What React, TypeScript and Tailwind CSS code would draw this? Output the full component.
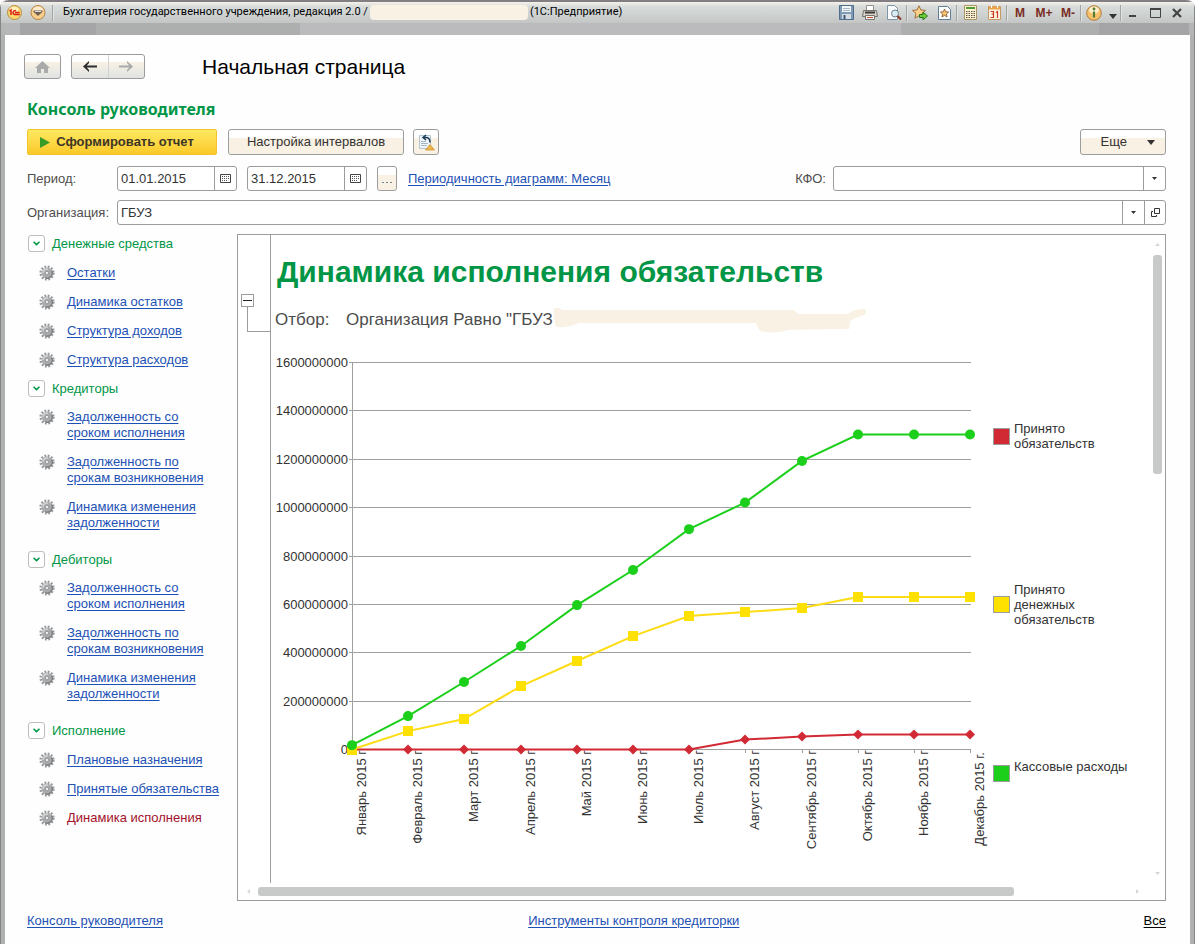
import { useState } from "react";
import type { ReactNode } from "react";

type Group = {
  title: string;
  items: string[];
  spaced?: boolean;
};

const groups: Group[] = [
  {
    title: "Денежные средства",
    items: ["Остатки", "Динамика остатков", "Структура доходов", "Структура расходов"],
  },
  {
    title: "Кредиторы",
    items: [
      "Задолженность со\nсроком исполнения",
      "Задолженность по\nсрокам возникновения",
      "Динамика изменения\nзадолженности",
    ],
  },
  {
    title: "Дебиторы",
    spaced: true,
    items: [
      "Задолженность со\nсроком исполнения",
      "Задолженность по\nсрокам возникновения",
      "Динамика изменения\nзадолженности",
    ],
  },
  {
    title: "Исполнение",
    spaced: true,
    items: ["Плановые назначения", "Принятые обязательства", "Динамика исполнения"],
  },
];

const months = [
  "Январь", "Февраль", "Март", "Апрель", "Май", "Июнь",
  "Июль", "Август", "Сентябрь", "Октябрь", "Ноябрь", "Декабрь",
];

// millions
const obligations = [0, 0, 0, 0, 0, 0, 0, 41, 54, 62, 62, 62];
const moneyObligations = [0, 76, 126, 262, 366, 469, 552, 568, 585, 630, 630, 630];
const expenses = [18, 138, 279, 428, 597, 742, 911, 1021, 1193, 1302, 1302, 1302];

const legend = [
  { label: "Принято\nобязательств", color: "bg-[#d12a34]" },
  { label: "Принято\nденежных\nобязательств", color: "bg-[#ffe100]" },
  { label: "Кассовые расходы", color: "bg-[#1bcf1b]" },
];

const LEFT = 81;
const STEP = 56.2;
const BASE = 409.5;

const px = (i: number) => Math.round(LEFT + i * STEP);
const py = (v: number) => BASE - (v * 387) / 1600;
const line = (values: number[]) => values.map((v, i) => `${px(i)},${py(v)}`).join(" ");

function Gear() {
  return (
    <svg width="16" height="16" viewBox="0 0 16 16" className="shrink-0">
      <circle cx="8" cy="8" r="6.4" fill="none" stroke="#97999b" strokeWidth="2.4" strokeDasharray="1.8 1.55" />
      <circle cx="8" cy="8" r="5.4" fill="#a9abad" />
      <path d="M12.500 5.500A5 5 0 0 1 6 12.600" fill="none" stroke="#7d7f82" strokeWidth="1.500" />
      <path d="M4 8A4 4 0 0 1 9 4.200" fill="none" stroke="#d2d4d5" strokeWidth="1.500" />
      <circle cx="8" cy="8" r="1.800" fill="#e9eaea" stroke="#8b8d90" strokeWidth=".8" />
    </svg>
  );
}

function Caret({ small }: { small?: boolean }) {
  return small ? (
    <svg width="5" height="3" viewBox="0 0 5 3" className="pointer-events-none">
      <path d="M0 0h5L2.5 3z" fill="#333" />
    </svg>
  ) : (
    <svg width="8" height="5" viewBox="0 0 8 5" className="pointer-events-none">
      <path d="M0 0h8L4 5z" fill="#333" />
    </svg>
  );
}

function Calendar() {
  return (
    <svg width="11" height="9" viewBox="0 0 11 9">
      <path d="M.5 .5h10v8H.5z" fill="#fff" stroke="#444" />
      <path d="M2 2.500h7M2 4.500h7M2 6.500h5" stroke="#555" strokeDasharray="1 1" />
    </svg>
  );
}

function Tool({ label, children }: { label: string; children: ReactNode }) {
  return (
    <button aria-label={label} className="flex h-5 w-6 items-center justify-center text-xs font-bold text-[#7a2b22]">
      {children}
    </button>
  );
}

function Sep() {
  return <span className="h-4 w-[2px] border-l border-[#a3a5a5] border-r border-r-[#e0e3e2]" />;
}

function TitleBar() {
  return (
    <header className="rounded-t-lg border-t-2 border-[#817f84] bg-[#b4b6b6]">
      <div className="flex h-[21px] items-center bg-linear-to-b from-[#f7f1e8] via-[#d8dddc] via-20% to-[#c3c6c5] px-[6px] text-black">
        <button aria-label="1С" className="mr-2">
          <svg width="15" height="15" viewBox="0 0 15 15">
            <circle cx="7.5" cy="7.5" r="7" fill="#fbd76c" stroke="#b88a48" />
            <ellipse cx="7" cy="4.5" rx="4.5" ry="2.8" fill="#fff1b8" />
            <path d="M2.500 6l1.500-1v5M9 5.800a2 2 0 1 0-.2 3.600h4M8 7.600h4.600" fill="none" stroke="#d8251c" strokeWidth="1.500" />
          </svg>
        </button>
        <button aria-label="Главное меню" className="mr-[6px]">
          <svg width="16" height="15" viewBox="0 0 16 15">
            <circle cx="8" cy="7.5" r="7" fill="#f9cf8c" stroke="#b58347" />
            <ellipse cx="8" cy="4.5" rx="5" ry="3" fill="#fdebd0" />
            <path d="M3.500 5.500h9v1.200L8 11 3.500 6.700z" fill="#6e5f52" />
            <path d="M5 6.500h6" stroke="#fff" strokeWidth=".8" />
          </svg>
        </button>
        <Sep />
        <span className="ml-[9px] whitespace-nowrap font-['Roboto',sans-serif] text-[11px]">
          Бухгалтерия государственного учреждения, редакция 2.0 /
        </span>
        <span className="mx-[2px] h-[15px] w-[158px] rounded-sm bg-[#f9f1e4]" />
        <span className="whitespace-nowrap font-['Roboto',sans-serif] text-[11px]">(1С:Предприятие)</span>
        <div className="ml-auto flex items-center">
          <Tool label="Сохранить">
            <svg width="15" height="15" viewBox="0 0 15 15">
              <path d="M.5 .5h14v14H.5z" fill="#7f9ab5" stroke="#4f6c8c" />
              <path d="M3 1h9v6H3z" fill="#f3f6f8" />
              <path d="M4 3.500h7M4 5.500h7" stroke="#a9b8c6" />
              <path d="M3 9h9v5H3z" fill="#d5dde4" />
              <path d="M4.500 10h2v4h-2z" fill="#3c5876" />
            </svg>
          </Tool>
          <Tool label="Печать">
            <svg width="16" height="15" viewBox="0 0 16 15">
              <path d="M4.500 .5h7v5h-7z" fill="#fff" stroke="#90908e" />
              <path d="M1.500 5.500h13l1 6h-15z" fill="#d4cfc7" stroke="#77736d" />
              <path d="M3 7.500h10" stroke="#3d3a36" strokeWidth="2" />
              <path d="M3.500 10.500h9v4h-9z" fill="#f5f5f5" stroke="#77736d" />
              <path d="M5 12.500h6" stroke="#c0502c" />
            </svg>
          </Tool>
          <Tool label="Просмотр">
            <svg width="16" height="15" viewBox="0 0 16 15">
              <path d="M1.500 .5h7l3 3v11h-10z" fill="#fafcfd" stroke="#8195a8" />
              <circle cx="9" cy="8.500" r="3.500" fill="#d8eaf2" stroke="#6f7f8c" />
              <path d="M11.500 11l3.500 3.500" stroke="#8c3f2a" strokeWidth="2.200" />
            </svg>
          </Tool>
          <Sep />
          <Tool label="Добавить в избранное">
            <svg width="16" height="15" viewBox="0 0 16 15">
              <path d="M7 .8l1.900 4.200 4.600.4-3.500 3.100 1.100 4.700L7 10.800l-4.100 2.400L4 8.500.5 5.400 5.100 5z" fill="#fbd08a" stroke="#a2713c" />
              <path d="M7.500 9.500h3.500V7l4.500 4-4.500 3.800v-2.300H7.500z" fill="#6dcb38" stroke="#23781b" />
            </svg>
          </Tool>
          <Tool label="Избранное">
            <svg width="13" height="14" viewBox="0 0 13 14">
              <path d="M.5 .5h9l3 3v10H.5z" fill="#fff" stroke="#5f7d96" />
              <path d="M6.500 3l1.200 2.700 3 .3-2.300 2 .7 3-2.600-1.600L3.900 11l.7-3-2.300-2 3-.3z" fill="#f8c26f" stroke="#7b5730" strokeWidth=".8" />
            </svg>
          </Tool>
          <Sep />
          <Tool label="Калькулятор">
            <svg width="13" height="15" viewBox="0 0 13 15">
              <path d="M.5 .5h12v14H.5z" fill="#fff4cf" stroke="#a89668" />
              <path d="M2 3h9" stroke="#4f9b35" strokeWidth="2" />
              <path d="M2 6.500h9M2 8.500h9M2 10.500h9M2 12.500h9" stroke="#5b5144" strokeDasharray="1.500 1" />
            </svg>
          </Tool>
          <Tool label="Календарь">
            <svg width="13" height="15" viewBox="0 0 13 15">
              <path d="M.5 1.500h12v13H.5z" fill="#fff7e4" stroke="#c79a63" />
              <path d="M1 3h11" stroke="#eba34c" strokeWidth="3" />
              <path d="M3.500 0v3M9.500 0v3" stroke="#fff" />
              <path d="M2.500 6.500h3v2.500h-2M5.500 9v3.500h-3M8 7.500l1.500-1v6.500" fill="none" stroke="#cf3a22" strokeWidth="1.200" />
            </svg>
          </Tool>
          <Sep />
          <Tool label="Память">M</Tool>
          <Tool label="Прибавить к памяти">M+</Tool>
          <Tool label="Вычесть из памяти">M-</Tool>
          <Sep />
          <Tool label="Справка">
            <svg width="16" height="16" viewBox="0 0 16 16">
              <circle cx="8" cy="8" r="7.300" fill="#f8c26a" stroke="#b07b3b" />
              <ellipse cx="8" cy="5" rx="5" ry="3.500" fill="#fdeecb" />
              <path d="M8 6.500v6" stroke="#4f7d34" strokeWidth="2.200" />
              <circle cx="8" cy="4" r="1.400" fill="#4f7d34" />
            </svg>
          </Tool>
          <button aria-label="Ещё" className="flex h-5 w-[14px] items-end justify-center pb-1">
            <Caret />
          </button>
          <Sep />
          <button aria-label="Свернуть" className="flex h-5 w-[22px] items-center justify-center">
            <svg width="10" height="10" viewBox="0 0 10 10">
              <path d="M1 8h7" stroke="#444" strokeWidth="2" />
            </svg>
          </button>
          <button aria-label="Развернуть" className="flex h-5 w-[22px] items-center justify-center">
            <svg width="11" height="10" viewBox="0 0 11 10">
              <path d="M.5 1v8.500h10V1" fill="none" stroke="#444" />
              <path d="M0 1h11" stroke="#444" strokeWidth="2" />
            </svg>
          </button>
          <button aria-label="Закрыть" className="flex h-5 w-[22px] items-center justify-center">
            <svg width="10" height="10" viewBox="0 0 10 10">
              <path d="M1 1l8 8M9 1L1 9" stroke="#444" strokeWidth="2.200" />
            </svg>
          </button>
        </div>
      </div>
      <div className="flex h-3 px-[5px]">
        <span className="w-[14px] bg-[#b6b7b9]" />
        <span className="w-[76px] bg-[#a5a5a8]" />
        <span className="w-[204px] bg-[#adafae]" />
        <span className="grow bg-[#bbbbbe]" />
        <span className="w-[198px] bg-[#adafae]" />
        <span className="w-[90px] bg-[#a5a5a8]" />
      </div>
    </header>
  );
}

function DateField({ id, label, value }: { id: string; label: string; value: string }) {
  const [date, setDate] = useState(value);
  return (
    <div className="mr-[10px] flex h-[25px] w-[120px] rounded-[3px] border border-[#9c9c9c] bg-white">
      <input
        id={id}
        aria-label={label}
        value={date}
        onChange={(e) => setDate(e.target.value)}
        className="w-0 grow px-[3px] text-[#333] outline-none"
      />
      <button aria-label="Выбрать дату" className="flex w-[22px] items-center justify-center border-l border-[#9c9c9c]">
        <Calendar />
      </button>
    </div>
  );
}

function Sidebar() {
  return (
    <nav className="w-[210px] shrink-0">
      {groups.map((g) => (
        <section key={g.title} className={g.spaced ? "mb-[9px] pt-[7px]" : "mb-[9px]"}>
          <div className="flex h-5 items-start pl-px leading-5 text-[#009646]">
            <button aria-label={g.title} className="mt-px mr-[7px] flex size-[17px] items-center justify-center rounded-[3px] border border-[#bdbdbd] bg-white">
              <svg width="7" height="5" viewBox="0 0 7 5">
                <path d="M.5 .8l3 2.800 3-2.800" fill="none" stroke="#009646" strokeWidth="1.500" />
              </svg>
            </button>
            <span>{g.title}</span>
          </div>
          <ul className="mt-[9px] flex flex-col gap-[9px]">
            {g.items.map((item) => (
              <li
                key={item}
                className={`flex items-start gap-3 pl-3 leading-4 ${item.includes("\n") ? "h-9 pt-px" : "h-5 pt-[2px]"}`}
              >
                <Gear />
                <a
                  href="#"
                  className={`whitespace-pre underline-offset-2 ${item === "Динамика исполнения" ? "text-[#a3122a]" : "text-[#1d51b5] underline"}`}
                >
                  {item}
                </a>
              </li>
            ))}
          </ul>
        </section>
      ))}
    </nav>
  );
}

function Chart() {
  return (
    <svg width="720" height="543" viewBox="0 0 720 543" className="shrink-0 font-['Liberation_Sans',Arial,sans-serif] text-[13px]">
      {[0, 1, 2, 3, 4, 5, 6, 7, 8].map((i) => {
        const y = Math.floor(py(i * 200)) + 0.5;
        return (
          <g key={i}>
            <path d={`M${LEFT - 3} ${y}H700`} stroke="#9f9f9f" />
            <text x={LEFT - 4} y={y + 4} textAnchor="end" fill="#333">
              {i * 200000000}
            </text>
          </g>
        );
      })}
      <path d={`M${LEFT + 0.5} 22V413`} stroke="#9f9f9f" />
      {months.map((m, i) => (
        <g key={m}>
          <path d={`M${px(i) + 0.5} 409v4`} stroke="#9f9f9f" />
          <text transform={`translate(${px(i) + 14} ${i === 11 ? 412 : 410}) rotate(-90)`} textAnchor="end" fill="#333">
            {m} 2015 г{i === 11 ? "." : ""}
          </text>
        </g>
      ))}

      <polyline points={line(obligations)} fill="none" stroke="#d12a34" strokeWidth="2" />
      {obligations.map((v, i) => (
        <path key={i} d={`M${px(i)} ${py(v) - 5}l5 5-5 5-5-5z`} fill="#d12a34" />
      ))}
      <polyline points={line(moneyObligations)} fill="none" stroke="#fedc14" strokeWidth="2" />
      {moneyObligations.map((v, i) => (
        <rect key={i} x={px(i) - 5} y={Math.round(py(v)) - 5} width="10" height="10" fill="#ffe100" />
      ))}
      <polyline points={line(expenses)} fill="none" stroke="#1bcf1b" strokeWidth="2" />
      {expenses.map((v, i) => (
        <circle key={i} cx={px(i)} cy={py(v)} r="5" fill="#1bcf1b" />
      ))}
    </svg>
  );
}

function Report() {
  return (
    <section className="flex min-w-0 grow flex-col border border-[#9c9c9c] bg-white">
      <div className="flex">
        <div className="w-[33px] shrink-0 border-r border-[#9c9c9c] pt-[59px] pl-[3px]">
          <button aria-label="Свернуть отчет" className="flex size-[13px] items-center justify-center border border-[#9c9c9c]">
            <span className="h-px w-[9px] bg-[#222]" />
          </button>
          <div className="ml-[6px] h-[25px] border-b border-l border-[#9c9c9c]" />
        </div>
        <div className="min-w-0 grow">
          <h2 className="mt-[19px] pl-[6px] text-[30px] leading-9 font-bold whitespace-nowrap text-[#009646]">
            Динамика исполнения обязательств
          </h2>
          <div className="mt-[20px] flex h-5 items-center pl-1 text-[17px] whitespace-nowrap text-[#4d4d4d]">
            <span className="w-[71px]">Отбор:</span>
            <span>Организация Равно "ГБУЗ</span>
            <svg width="314" height="25" viewBox="0 0 314 25" className="shrink-0">
              <path
                d="M1 1q4-3 8 1h232l4 4h50q5-5 17-5 3 5-3 7-10 2-12 6l-1 7q-30 0-60 1-20 5-30 0l-3-7H26q-10 5-23 4Q0 10 1 1z"
                fill="#f9f1e4"
              />
            </svg>
          </div>
          <div className="mt-[10px] flex">
            <Chart />
            <ul className="mt-3 grid h-[506px] grid-rows-3 text-[#333]">
              {legend.map((l) => (
                <li key={l.label} className="flex items-center gap-1">
                  <span className={`ml-[2px] size-[17px] shrink-0 border border-[#9c9c9c] ${l.color}`} />
                  <span className="min-h-[30px] leading-[15px] whitespace-pre">{l.label}</span>
                </li>
              ))}
            </ul>
          </div>
        </div>
        <div className="flex w-4 shrink-0 flex-col items-center pt-2 pb-2">
          <svg width="5" height="3" viewBox="0 0 5 3">
            <path d="M0 3h5L2.500 0z" fill="#d4d8d7" />
          </svg>
          <span className="mt-[9px] h-[219px] w-[9px] rounded-[3px] bg-[#c8cac9]" />
          <svg width="5" height="3" viewBox="0 0 5 3" className="mt-auto">
            <path d="M0 0h5L2.500 3z" fill="#d4d8d7" />
          </svg>
        </div>
      </div>
      <div className="flex h-[17px] items-center pr-[26px] pl-[9px]">
        <svg width="3" height="5" viewBox="0 0 3 5">
          <path d="M3 0v5L0 2.500z" fill="#d4d8d7" />
        </svg>
        <span className="ml-2 h-[9px] w-[756px] rounded-[3px] bg-[#c8cac9]" />
        <svg width="3" height="5" viewBox="0 0 3 5" className="ml-auto">
          <path d="M0 0v5l3-2.500z" fill="#d4d8d7" />
        </svg>
      </div>
    </section>
  );
}

export default function App() {
  const [kfo, setKfo] = useState("");
  const [org, setOrg] = useState("ГБУЗ");

  return (
    <div className="flex min-h-screen flex-col rounded-t-lg border-x border-[#858585] font-['Liberation_Sans',Arial,sans-serif] text-[13px] text-[#4d4d4d]">
      <TitleBar />
      <main className="grow border-x-4 border-[#b0b1b1] bg-[#fefefe] pr-6 pl-[22px]">
        <div className="mt-[19px] -ml-[3px] flex h-[25px] items-center">
          <button
            aria-label="Домой"
            className="mr-[10px] flex h-[25px] w-[37px] items-center justify-center rounded-[3px] border border-[#9c9c9c] bg-linear-to-b from-white from-30% via-[#f9f1e4] via-30% to-[#dfe3e2]"
          >
            <svg width="15" height="12" viewBox="0 0 15 12">
              <path d="M7.500 0L15 7h-2v5H9V8H6v4H2V7H0z" fill="#a9abab" />
            </svg>
          </button>
          <div className="flex h-[25px] w-[74px] rounded-[3px] border border-[#9c9c9c] bg-linear-to-b from-white from-30% via-[#f9f1e4] via-30% to-[#dfe3e2]">
            <button aria-label="Назад" className="flex grow items-center justify-center border-r border-[#cfd3d2]">
              <svg width="14" height="11" viewBox="0 0 14 11">
                <path d="M6 0L0 5.500 6 11V9L3.800 6.500H14v-2H3.800L6 2z" fill="#2d2d2d" />
              </svg>
            </button>
            <button aria-label="Вперед" className="flex grow items-center justify-center">
              <svg width="14" height="11" viewBox="0 0 14 11">
                <path d="M8 0l6 5.500L8 11V9l2.200-2.500H0v-2h10.200L8 2z" fill="#a9abab" />
              </svg>
            </button>
          </div>
          <h1 className="ml-[57px] text-[21px] whitespace-nowrap text-black">Начальная страница</h1>
        </div>

        <h2 className="mt-[18px] font-['Noto_Sans',sans-serif] text-base leading-6 font-bold text-[#009646]">
          Консоль руководителя
        </h2>

        <div className="mt-2 flex h-[26px]">
          <button className="mr-[11px] flex w-[190px] items-center justify-center gap-[6px] rounded-xs border border-[#f2c32c] bg-linear-to-b from-[#fee95f] to-[#fbc926] pr-[10px] font-bold text-[#3d3526]">
            <svg width="10" height="11" viewBox="0 0 10 11">
              <path d="M0 0l10 5.500L0 11z" fill="#389b27" />
            </svg>
            Сформировать отчет
          </button>
          <button className="mr-[9px] w-[176px] rounded-[3px] border border-[#9c9c9c] bg-linear-to-b from-white from-33% to-[#f9f1e4] to-33% text-[#333]">
            Настройка интервалов
          </button>
          <button
            aria-label="Настройки отчета"
            className="flex w-[26px] items-center justify-center rounded-[3px] border border-[#9c9c9c] bg-linear-to-b from-white from-33% to-[#f9f1e4] to-33%"
          >
            <svg width="17" height="17" viewBox="0 0 17 17">
              <path d="M1.500 1.500h11v13h-11z" fill="#eef4f7" stroke="#b5c5cf" />
              <path d="M3 7.500h5M3 9.500h7M3 11.500h6" stroke="#a2b7c6" />
              <path d="M8 1L5 3.500 8 6M5.500 3.500H8q4 0 4 5" fill="none" stroke="#1e3f59" strokeWidth="1.500" />
              <path d="M12 10.500l4.500 5.500h-9z" fill="#eeb64a" stroke="#cc8e2d" strokeWidth=".7" />
            </svg>
          </button>
          <button className="ml-auto flex w-[86px] items-center justify-end gap-5 rounded-[3px] border border-[#9c9c9c] bg-linear-to-b from-white from-33% to-[#f9f1e4] to-33% pr-[10px] text-[#333]">
            Еще
            <Caret />
          </button>
        </div>

        <div className="mt-[11px] flex h-[25px] items-center">
          <label htmlFor="from" className="w-[90px] shrink-0">
            Период:
          </label>
          <DateField id="from" label="Начало периода" value="01.01.2015" />
          <DateField id="to" label="Конец периода" value="31.12.2015" />
          <button
            aria-label="Выбрать период"
            className="mr-[11px] flex h-[25px] w-5 items-center justify-center rounded-[3px] border border-[#9c9c9c] bg-linear-to-b from-white from-33% to-[#f9f1e4] to-33%"
          >
            <svg width="10" height="1" viewBox="0 0 10 1" className="mt-2">
              <path d="M0 .5h10" stroke="#6f8296" strokeDasharray="2 2" />
            </svg>
          </button>
          <a href="#" className="whitespace-nowrap text-[#1d51b5] underline underline-offset-2">
            Периодичность диаграмм: Месяц
          </a>
          <label htmlFor="kfo" className="mr-[7px] ml-auto">
            КФО:
          </label>
          <div className="relative flex h-[25px] w-[333px] rounded-[3px] border border-[#9c9c9c] bg-white">
            <select
              id="kfo"
              value={kfo}
              onChange={(e) => setKfo(e.target.value)}
              className="w-full appearance-none px-[3px] text-[#333] outline-none"
            >
              <option value=""></option>
            </select>
            <span className="pointer-events-none absolute inset-y-0 right-0 flex w-[22px] items-center justify-center border-l border-[#9c9c9c]">
              <Caret small />
            </span>
          </div>
        </div>

        <div className="mt-[9px] flex h-[25px] items-center">
          <label htmlFor="org" className="w-[90px] shrink-0">
            Организация:
          </label>
          <div className="flex h-[25px] grow rounded-[3px] border border-[#9c9c9c] bg-white">
            <div className="relative flex grow">
              <select
                id="org"
                value={org}
                onChange={(e) => setOrg(e.target.value)}
                className="w-full appearance-none px-[3px] text-[#333] outline-none"
              >
                <option>ГБУЗ</option>
              </select>
              <span className="pointer-events-none absolute inset-y-0 right-0 flex w-[22px] items-center justify-center border-l border-[#9c9c9c]">
                <Caret small />
              </span>
            </div>
            <button aria-label="Открыть" className="flex w-[21px] items-center justify-center border-l border-[#9c9c9c]">
              <svg width="9" height="9" viewBox="0 0 9 9">
                <path d="M3.500 .5h5v5h-5zM2 3.500H.5v5h5V7" fill="none" stroke="#333" />
              </svg>
            </button>
          </div>
        </div>

        <div className="mt-[9px] flex">
          <Sidebar />
          <Report />
        </div>

        <footer className="mt-[10px] grid grid-cols-[44%_1fr_auto] leading-5 text-[#1d51b5]">
          <a href="#" className="underline underline-offset-2">Консоль руководителя</a>
          <a href="#" className="underline underline-offset-2">Инструменты контроля кредиторки</a>
          <a href="#" className="text-black underline underline-offset-2">Все</a>
        </footer>
      </main>
    </div>
  );
}
